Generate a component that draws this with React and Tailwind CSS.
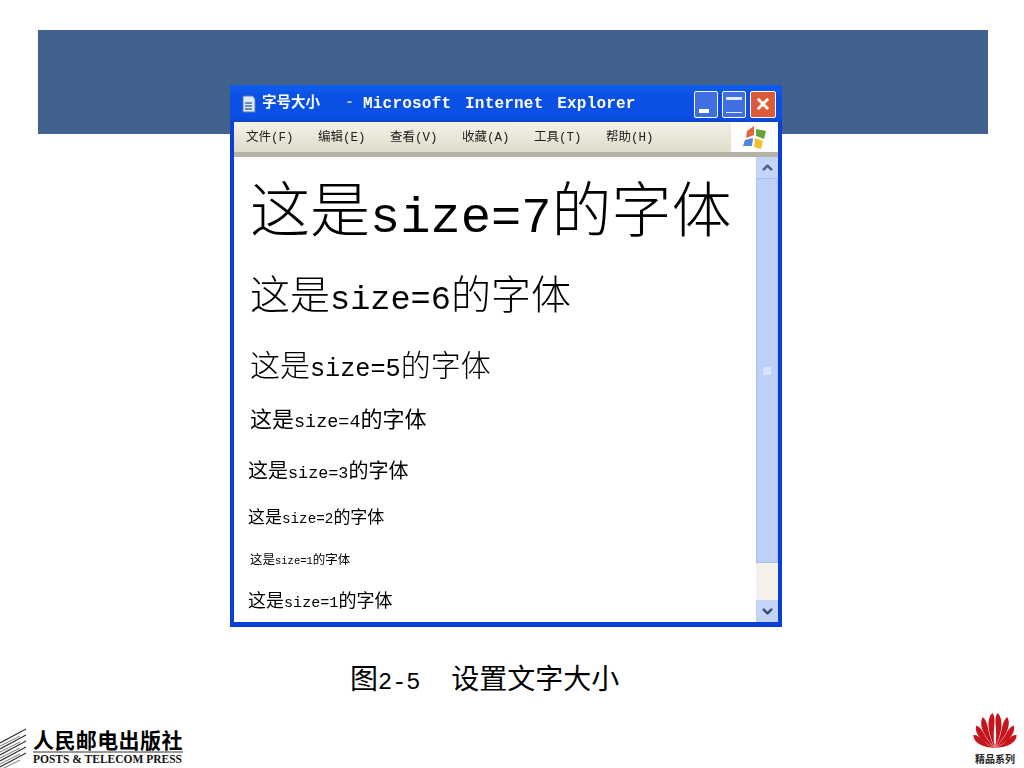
import React from "react";
import { ChevronUp, ChevronDown } from "lucide-react";

const cjk = "font-['Liberation_Mono','Noto_Sans_CJK_SC',monospace]";

const lines = [
  { n: 7, cls: "text-[60px] h-[60px] ml-[2px] font-light" },
  { n: 6, cls: "text-[40px] h-[40px] mt-[33px] ml-[2px] font-light" },
  { n: 5, cls: "text-[30px] h-[30px] mt-[34px] ml-[2px] font-light" },
  { n: 4, cls: "text-[22px] h-[22px] mt-[28px] ml-[2px]" },
  { n: 3, cls: "text-[20px] h-[20px] mt-[30px]" },
  { n: 2, cls: "text-[17px] h-[17px] mt-[27px]" },
  { n: 1, cls: "text-[12.5px] h-[13px] mt-[28px] ml-[2px]" },
  { n: 1, cls: "text-[18px] h-[18px] mt-[25px]" },
];

const menus = ["文件(F)", "编辑(E)", "查看(V)", "收藏(A)", "工具(T)", "帮助(H)"];

const blades = [
  { a: -66, l: 25 },
  { a: -46, l: 29 },
  { a: -27, l: 33 },
  { a: -9, l: 35 },
  { a: 9, l: 35 },
  { a: 27, l: 33 },
  { a: 46, l: 29 },
  { a: 66, l: 25 },
];

function WinLogo() {
  return (
    <svg width="28" height="28" viewBox="0 0 28 28">
      <path d="M6 8 L13 3 L13 12 L5 15 Z" fill="#e0653a" />
      <path d="M15 6 L25 8 L23 16 L15 13 Z" fill="#66a33a" />
      <path d="M4 17 L12 15 L11 23 L2 23 Z" fill="#4f86d8" />
      <path d="M14 15 L22 18 L20 26 L13 24 Z" fill="#eec22e" />
    </svg>
  );
}

function PageIcon() {
  return (
    <svg width="17" height="18" viewBox="0 0 17 18">
      <path d="M3 1 H13 L15 4 V17 H3 Z" fill="#dfe9f5" stroke="#5b7da6" />
      <path d="M5 8 H12 M5 11 H12 M5 14 H12" stroke="#3f6fa8" strokeWidth="1.5" />
    </svg>
  );
}

function PagesLogo() {
  return (
    <svg width="27" height="40" viewBox="0 0 27 40">
      {[0, 6, 12, 18, 24].map(y => (
        <g key={y}>
          <path d={`M0 ${y + 15} L26 ${y + 1}`} stroke="#333" strokeWidth="1.2" fill="none" />
          <path d={`M0 ${y + 18} L20 ${y + 8}`} stroke="#777" strokeWidth="1" fill="none" />
        </g>
      ))}
    </svg>
  );
}

function FanLogo() {
  return (
    <svg width="46" height="36" viewBox="0 0 46 36">
      {blades.map(({ a, l }) => {
        const dir = a < 0 ? 1 : -1;
        const d = `M23 36 C${23 - dir} ${36 - l * 0.5} ${23 + dir * 7} ${36 - l * 0.8} ${23 + dir * 3} ${36 - l} C${23 - dir * 5} ${36 - l * 0.85} ${23 - dir * 4} ${36 - l * 0.4} 23 36 Z`;
        return <path key={a} d={d} fill="#c4161c" transform={`rotate(${a} 23 36)`} />;
      })}
    </svg>
  );
}

export default function App() {
  return (
    <div className="w-[1024px] h-[768px] bg-white overflow-hidden flex flex-col pt-[30px] relative">
      <div className="ml-[38px] w-[950px] h-[104px] shrink-0 bg-[#41618f]" />

      {/* browser window sits over the banner */}
      <div className="absolute left-[230px] top-[85px] w-[552px] h-[542px] bg-[#0a3fd4] rounded-t-[3px] flex flex-col px-[4px] pb-[5px]">
        <div className="h-[37px] -mx-[4px] px-[10px] shrink-0 flex items-center pr-[6px] rounded-t-[3px] bg-[linear-gradient(#0f5ff0,#0a50e4_30%,#0a50e4_85%,#0a45cc)]">
          <PageIcon />
          <span className={`ml-[5px] text-white text-[14.5px] font-bold whitespace-nowrap blur-[0.5px] ${cjk}`}>字号大小</span>
          <span className={`ml-[25px] text-[#b8c8f0] text-[15px] font-bold blur-[0.5px] ${cjk}`}>-</span>
          <span className={`ml-[9px] text-white text-[16px] font-bold tracking-[0.2px] [word-spacing:4px] whitespace-pre blur-[0.5px] ${cjk}`}>Microsoft Internet Explorer</span>
          <div className="ml-auto flex gap-[4px] mt-[1px]">
            <div className="w-[24px] h-[27px] bg-[#3f6fe0] border border-white rounded-[2px] flex items-end p-[4px]">
              <div className="w-[10px] h-[4px] bg-white" />
            </div>
            <div className="w-[24px] h-[27px] bg-[#3f6fe0] border border-white rounded-[2px] flex p-[3px]">
              <div className="w-full h-[16px] border-t-[3px] border-b border-[#dfe8fb] mt-[2px]" />
            </div>
            <div className="w-[26px] h-[27px] bg-[#dc5a38] border border-white rounded-[2px] flex items-center justify-center text-white text-[24px] leading-none font-bold font-['Liberation_Sans',sans-serif]">
              ×
            </div>
          </div>
        </div>

        <div className="h-[35px] shrink-0 flex border-b-[5px] border-[#b5b3a4] bg-white">
          <div className={`flex-1 flex items-center gap-[24.5px] pl-[12px] pt-[3px] text-[12.5px] text-[#222] whitespace-nowrap bg-[linear-gradient(#f4f2e8,#dedbc9)] ${cjk}`}>
            {menus.map(m => <span key={m} className="blur-[0.5px]">{m}</span>)}
          </div>
          <div className="w-[47px] flex items-center justify-center">
            <WinLogo />
          </div>
        </div>

        <div className="flex-1 min-h-0 flex bg-white">
          <div className={`flex-1 pl-[14px] pt-[29px] text-black ${cjk}`}>
            {lines.map((l, i) => (
              <div key={i} className={`${l.cls} leading-none whitespace-nowrap blur-[0.5px]`}>
                这是<span className="text-[0.84em]">size={l.n}</span>的字体
              </div>
            ))}
          </div>
          <div className="w-[22px] shrink-0 flex flex-col bg-[#f3f1ea]">
            <div className="h-[21px] bg-[#c3d4f7] flex items-center justify-center text-[#4d6185]">
              <ChevronUp size={15} strokeWidth={4} />
            </div>
            <div className="h-[385px] bg-[#bcd0f8] border border-[#a8bfef] flex items-center justify-center">
              <div className="w-[8px] h-[8px] bg-[#d9e4fb]" />
            </div>
            <div className="flex-1" />
            <div className="h-[22px] bg-[#c3d4f7] flex items-center justify-center text-[#3f4f70]">
              <ChevronDown size={15} strokeWidth={4} />
            </div>
          </div>
        </div>
      </div>

      <div className="flex-1 flex flex-col justify-end">
        <div className={`pl-[350px] text-[28px] leading-[32px] text-black whitespace-nowrap flex items-baseline ${cjk}`}>
          <span>图<span className="text-[0.84em]">2-5</span></span>
          <span className="ml-[31px]">设置文字大小</span>
        </div>
        <div className="h-[21px]" />
        <div className="h-[48px] flex items-end justify-between pr-[6px]">
          <div className="flex items-end gap-[6px]">
            <PagesLogo />
            <div className="flex flex-col pb-[2px]">
              <span className="text-[21px] leading-[23px] font-bold text-black tracking-[0.4px] font-['Noto_Sans_CJK_SC',serif] whitespace-nowrap">人民邮电出版社</span>
              <span className="border-t-2 border-[#999] text-[11.5px] leading-[13px] font-bold text-[#111] font-['Liberation_Serif',serif] whitespace-nowrap">POSTS &amp; TELECOM PRESS</span>
            </div>
          </div>
          <div className="flex flex-col items-center pb-[4px]">
            <FanLogo />
            <span className="mt-[6px] text-[10px] leading-[10px] font-bold text-[#222] font-['Noto_Sans_CJK_SC',sans-serif]">精品系列</span>
          </div>
        </div>
      </div>
    </div>
  );
}
